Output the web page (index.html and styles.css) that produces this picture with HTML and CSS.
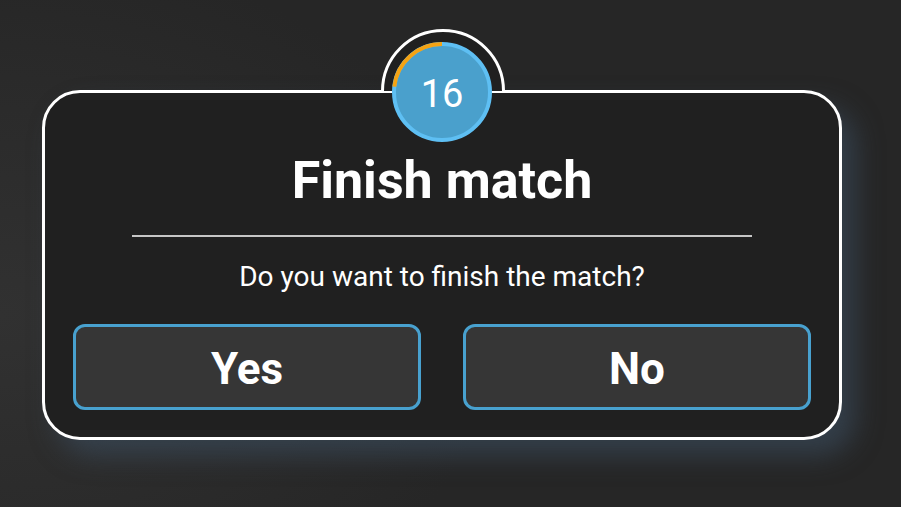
FILE: index.html
```html
<!DOCTYPE html>
<html>
<head>
<meta charset="utf-8">
<link rel="stylesheet" href="styles.css">
</head>
<body>
<div class="stage">
  <div class="dialog">
    <div class="bump"></div>
    <div class="timer">
      <svg class="timer-svg" width="100" height="100" viewBox="0 0 100 100">
        <circle cx="50" cy="50" r="48" fill="#4aa0cc" stroke="#5ebff3" stroke-width="4"/>
        <path d="M50 2 A48 48 0 0 0 2.3 44.6" fill="none" stroke="#f5a313" stroke-width="4"/>
      </svg>
      <span class="timer-num">16</span>
    </div>
    <h1 class="title">Finish match</h1>
    <div class="divider"></div>
    <p class="message">Do you want to finish the match?</p>
    <div class="actions">
      <button class="btn">Yes</button>
      <button class="btn">No</button>
    </div>
  </div>
</div>
</body>
</html>
```

FILE: styles.css
```css
html, body {
  margin: 0;
  padding: 0;
  height: 100%;
}
body {
  background: radial-gradient(ellipse 70% 90% at 0% 62%, #313131 0%, #2b2b2b 45%, #262626 80%);
  font-family: Roboto, "Liberation Sans", sans-serif;
  color: #fff;
  overflow: hidden;
}
.stage {
  padding: 90px 0 0 42px;
}
.dialog {
  position: relative;
  box-sizing: border-box;
  width: 800px;
  height: 350px;
  border: 3px solid #ffffff;
  border-radius: 38px;
  background: #202020;
  box-shadow: 14px 16px 26px rgba(60, 78, 96, 0.6);
  padding: 57px 28px 0;
  display: flex;
  flex-direction: column;
  align-items: center;
}
.bump {
  position: absolute;
  left: 336px;
  top: -64px;
  width: 124px;
  height: 124px;
  box-sizing: border-box;
  border: 3px solid #ffffff;
  border-radius: 50%;
  background: #202020;
  clip-path: inset(0 0 50% 0);
}
.timer {
  position: absolute;
  left: 347px;
  top: -51px;
  width: 100px;
  height: 100px;
  display: flex;
  align-items: center;
  justify-content: center;
}
.timer-svg {
  position: absolute;
  left: 0;
  top: 0;
}
.timer-num {
  position: relative;
  font-size: 38px;
  font-weight: 400;
  line-height: 1;
  margin-top: 3px;
}
.title {
  margin: 0;
  font-size: 52px;
  font-weight: 700;
  line-height: 62px;
  height: 62px;
}
.divider {
  margin-top: 23px;
  width: 620px;
  height: 2px;
  background: #c6c6c6;
}
.message {
  margin: 23px 0 0;
  font-size: 28px;
  line-height: 34px;
  font-weight: 400;
}
.actions {
  margin-top: 30px;
  display: flex;
  gap: 42px;
  width: 100%;
}
.btn {
  flex: 1;
  height: 86px;
  box-sizing: border-box;
  border: 3px solid #48a1cf;
  border-radius: 12px;
  background: #363636;
  color: #fff;
  font-family: Roboto, "Liberation Sans", sans-serif;
  font-size: 44px;
  font-weight: 700;
  padding: 4px 0 0;
}
```
